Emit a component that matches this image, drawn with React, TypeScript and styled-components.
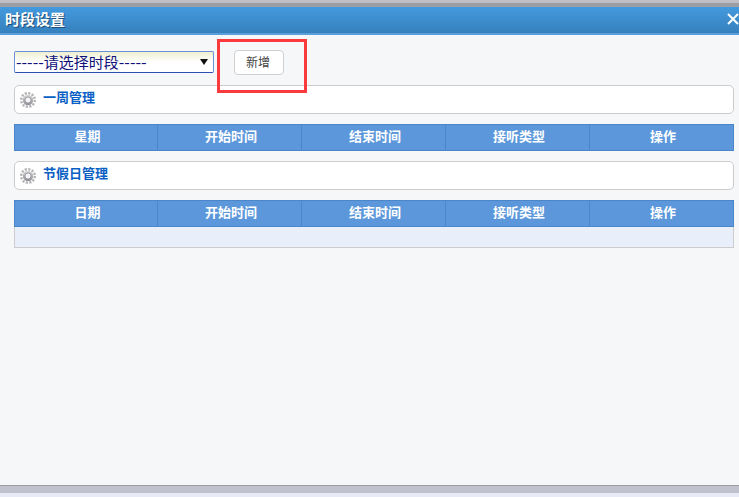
import React from 'react'
import styled, { createGlobalStyle } from 'styled-components'

const GlobalStyle = createGlobalStyle`
  html, body {
    margin: 0;
    padding: 0;
    height: 100%;
    background: #f6f7f9;
    font-family: 'Noto Sans CJK SC', 'Liberation Sans', sans-serif;
  }
  * { box-sizing: border-box; }
`

const Page = styled.div`
  position: relative;
  width: 739px;
  height: 497px;
  display: flex;
  flex-direction: column;
  overflow: hidden;
  background: #f6f7f9;
`

const TopStrip = styled.div`
  height: 7px;
  flex: none;
  background: #bfc0c6;
  border-bottom: 4px solid #9c9ea4;
`

const Header = styled.div`
  height: 28px;
  flex: none;
  display: flex;
  align-items: center;
  justify-content: space-between;
  padding: 0 0 2px 5px;
  background: linear-gradient(#439ade, #3680bd);
  border-bottom: 2px solid #5a9fdc;
`

const Title = styled.div`
  color: #fff;
  font-size: 15px;
  font-weight: 700;
  line-height: 20px;
  text-shadow: 1px 1px 0 #1f4f78;
`

const CloseIcon = styled.svg`
  width: 12px;
  height: 12px;
  stroke: #fff;
  stroke-width: 2;
  fill: none;
`

const Body = styled.div`
  flex: 1;
  display: flex;
  flex-direction: column;
  padding: 15px 5px 0 14px;
`

const Toolbar = styled.div`
  display: flex;
  align-items: flex-start;
  gap: 20px;
  height: 25px;
  margin-bottom: 10px;
`

const FakeSelect = styled.div`
  width: 200px;
  height: 22px;
  margin-top: 1px;
  display: flex;
  align-items: center;
  justify-content: space-between;
  padding: 0 5px 1px 1px;
  border: 1px solid #6d8fd8;
  border-bottom-color: #2b4fb5;
  border-radius: 2px;
  background: linear-gradient(#eef0d0, #fff 50%);
  color: #10107a;
  font-size: 15px;
  line-height: 20px;
  white-space: nowrap;
`

const Dashes = styled.span`
  font-size: 16px;
`

const Arrow = styled.svg`
  width: 8px;
  height: 6px;
  fill: #111;
`

const AddButton = styled.button`
  width: 50px;
  height: 25px;
  padding: 0 2px 2px 0;
  border: 1px solid #d0d0d0;
  border-radius: 4px;
  background: #fff;
  color: #444;
  font-family: inherit;
  font-size: 12px;
  line-height: 20px;
`

const Panel = styled.div`
  height: 29px;
  display: flex;
  align-items: flex-start;
  gap: 7px;
  padding: 4px 0 0 5px;
  margin-bottom: 10px;
  border: 1px solid #ccc;
  border-radius: 5px;
  background: #fff;
`

const GearIcon = styled.svg`
  width: 16px;
  height: 16px;
  flex: none;
  margin-top: 2px;
`

const PanelTitle = styled.div`
  color: #0a5fc4;
  font-size: 13px;
  font-weight: 700;
  line-height: 14px;
`

const Table = styled.div`
  margin-bottom: 10px;
`

const HeadRow = styled.div`
  height: 27px;
  display: grid;
  grid-template-columns: 142px repeat(4, 144px);
  background: #5b97da;
  border: 1px solid #4a86c8;
`

const HeadCell = styled.div`
  display: flex;
  align-items: center;
  justify-content: center;
  padding: 0 0 4px 3px;
  color: #fff;
  font-size: 13px;
  font-weight: 700;
  border-left: 1px solid #4a86c8;
  &:first-child { border-left: 0; }
`

const EmptyRow = styled.div`
  height: 21px;
  background: #e8eefa;
  border: 1px solid #ccc;
  border-top: 0;
`

const Footer = styled.div`
  height: 12px;
  flex: none;
  background: #c0c3ce;
  border-top: 1px solid #9b9c9f;
  border-bottom: 4px solid #e8ebf5;
`

const RedBox = styled.div`
  position: absolute;
  left: 217px;
  top: 39px;
  width: 90px;
  height: 54px;
  border: 3px solid #fb3a3d;
  pointer-events: none;
`

const Gear = () => (
  <GearIcon viewBox='0 0 16 16'>
    <defs>
      <linearGradient id='gearFill' x1='0' y1='0' x2='0' y2='1'>
        <stop offset='0' stopColor='#d8d8d8' />
        <stop offset='1' stopColor='#8f8f96' />
      </linearGradient>
    </defs>
    <circle cx='8' cy='8' r='6.8' fill='none' stroke='#b4b4b8' strokeWidth='2.4' strokeDasharray='2.2 1.36' />
    <circle cx='8' cy='8' r='5.2' fill='url(#gearFill)' />
    <circle cx='8' cy='8' r='3' fill='#f4f4f8' stroke='#77777f' strokeWidth='0.6' />
  </GearIcon>
)

const weekColumns = ['星期', '开始时间', '结束时间', '接听类型', '操作']
const holidayColumns = ['日期', '开始时间', '结束时间', '接听类型', '操作']

const App = () => (
  <Page>
    <GlobalStyle />
    <TopStrip />
    <Header>
      <Title>时段设置</Title>
      <CloseIcon viewBox='0 0 12 12'>
        <path d='M1 1 L11 11 M11 1 L1 11' />
      </CloseIcon>
    </Header>
    <Body>
      <Toolbar>
        <FakeSelect>
          <span>
            <Dashes>-----</Dashes>请选择时段<Dashes>-----</Dashes>
          </span>
          <Arrow viewBox='0 0 8 6'>
            <path d='M0 0 H8 L4 6 Z' />
          </Arrow>
        </FakeSelect>
        <AddButton>新增</AddButton>
      </Toolbar>
      <Panel>
        <Gear />
        <PanelTitle>一周管理</PanelTitle>
      </Panel>
      <Table>
        <HeadRow>
          {weekColumns.map((c) => (
            <HeadCell key={c}>{c}</HeadCell>
          ))}
        </HeadRow>
      </Table>
      <Panel>
        <Gear />
        <PanelTitle>节假日管理</PanelTitle>
      </Panel>
      <Table>
        <HeadRow>
          {holidayColumns.map((c) => (
            <HeadCell key={c}>{c}</HeadCell>
          ))}
        </HeadRow>
        <EmptyRow />
      </Table>
    </Body>
    <Footer />
    <RedBox />
  </Page>
)

export default App
